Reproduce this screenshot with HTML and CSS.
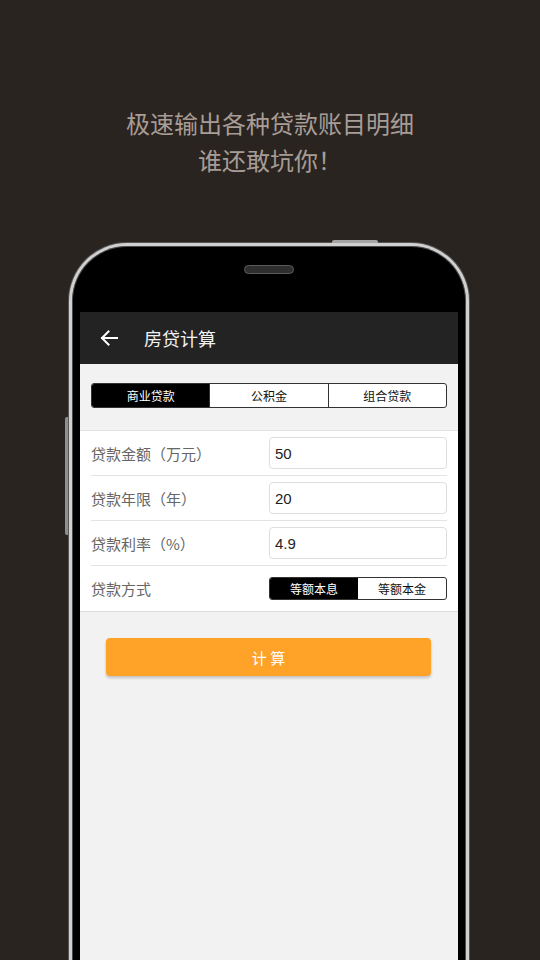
FILE: index.html
```html
<!DOCTYPE html>
<html lang="zh-CN">
<head>
<meta charset="utf-8">
<title>房贷计算</title>
<link rel="stylesheet" href="styles.css">
</head>
<body>
<div class="hero">
  <p class="hero-line">极速输出各种贷款账目明细</p>
  <p class="hero-line">谁还敢坑你！</p>
</div>
<div class="phone">
  <span class="btn-top"></span>
  <span class="btn-side"></span>
  <div class="bezel-top"><span class="speaker"></span></div>
  <div class="screen">
    <div class="appbar">
      <svg class="back" viewBox="0 0 18 16" width="18" height="16"><path d="M17 8H2M8.5 1.5L2 8l6.5 6.5" fill="none" stroke="#fff" stroke-width="2" stroke-linecap="square"/></svg>
      <span class="title">房贷计算</span>
    </div>
    <div class="content">
      <div class="tabs">
        <span class="tab tab-on">商业贷款</span>
        <span class="tab">公积金</span>
        <span class="tab">组合贷款</span>
      </div>
      <div class="form">
        <div class="row">
          <span class="label">贷款金额（万元）</span>
          <span class="field">50</span>
        </div>
        <div class="row">
          <span class="label">贷款年限（年）</span>
          <span class="field">20</span>
        </div>
        <div class="row">
          <span class="label">贷款利率（%）</span>
          <span class="field">4.9</span>
        </div>
        <div class="row">
          <span class="label">贷款方式</span>
          <div class="toggle">
            <span class="opt opt-on">等额本息</span>
            <span class="opt">等额本金</span>
          </div>
        </div>
      </div>
      <div class="calc">计 算</div>
    </div>
  </div>
</div>
</body>
</html>
```
FILE: styles.css
```css
html, body {
  margin: 0;
  padding: 0;
}
body {
  width: 540px;
  height: 960px;
  overflow: hidden;
  background: #2a2421;
  font-family: "Noto Sans CJK SC", "Noto Sans", sans-serif;
}
.hero {
  padding-top: 104px;
  text-align: center;
}
.hero-line {
  margin: 0;
  font-family: "Noto Sans CJK TC", "Noto Sans CJK SC", sans-serif;
  font-size: 24px;
  line-height: 37px;
  color: #a79d96;
}
.phone {
  position: relative;
  box-sizing: border-box;
  width: 400px;
  height: 760px;
  margin: 65px 0 0 69px;
  border: 3px solid #d0d0d0;
  border-bottom: none;
  border-radius: 58px 58px 0 0;
  background: #000;
  padding: 0 8px;
  box-shadow: inset 0 0 0 1px #4a4a4a, 0 0 0 1px #555;
}
.btn-top {
  position: absolute;
  top: -6px;
  left: 260px;
  width: 46px;
  height: 3px;
  background: #a5a5a5;
  border-radius: 2px 2px 0 0;
}
.btn-side {
  position: absolute;
  top: 171px;
  left: -7px;
  width: 3px;
  height: 118px;
  background: #8f8f8f;
  border-radius: 2px 0 0 2px;
}
.bezel-top {
  height: 66px;
  display: flex;
  justify-content: center;
  align-items: flex-start;
}
.speaker {
  margin-top: 19px;
  width: 48px;
  height: 7px;
  border: 1px solid #5a5a5a;
  border-radius: 5px;
  background: #2e2e2e;
}
.screen {
  width: 378px;
  height: 700px;
  background: #f2f2f2;
}
.appbar {
  height: 52px;
  background: #232323;
  display: flex;
  align-items: center;
  padding-left: 20px;
}
.back {
  display: block;
}
.title {
  margin-left: 26px;
  font-size: 18px;
  color: #f2f2f2;
}
.content {
  padding-top: 19px;
}
.tabs {
  display: flex;
  margin: 0 11px;
  height: 25px;
  box-sizing: border-box;
  border: 1px solid #333;
  border-radius: 3px;
  overflow: hidden;
  background: #fff;
}
.tab {
  flex: 1;
  display: flex;
  align-items: center;
  justify-content: center;
  font-size: 12px;
  color: #111;
  border-left: 1px solid #333;
}
.tab:first-child {
  border-left: none;
}
.tab-on {
  background: #000;
  color: #fff;
}
.form {
  margin-top: 22px;
  background: #fff;
  border-top: 1px solid #e2e2e2;
  border-bottom: 1px solid #dcdcdc;
  padding: 0 11px;
}
.row {
  height: 45px;
  box-sizing: border-box;
  display: flex;
  align-items: center;
  justify-content: space-between;
  border-bottom: 1px solid #e3e3e3;
}
.row:last-child {
  border-bottom: none;
}
.label {
  font-size: 15px;
  color: #666;
}
.field {
  box-sizing: border-box;
  width: 178px;
  height: 32px;
  border: 1px solid #dedede;
  border-radius: 4px;
  padding-left: 5px;
  display: flex;
  align-items: center;
  font-family: "Liberation Sans", Arial, sans-serif;
  font-size: 15px;
  color: #222;
}
.toggle {
  box-sizing: border-box;
  width: 178px;
  height: 23px;
  display: flex;
  border: 1px solid #333;
  border-radius: 3px;
  overflow: hidden;
}
.opt {
  flex: 1;
  display: flex;
  align-items: center;
  justify-content: center;
  font-size: 12px;
  color: #111;
}
.opt-on {
  background: #000;
  color: #fff;
}
.calc {
  margin: 26px 27px 0 26px;
  height: 38px;
  border-radius: 4px;
  background: #fea228;
  box-shadow: 0 2px 3px rgba(0,0,0,0.2);
  display: flex;
  align-items: center;
  justify-content: center;
  font-size: 15px;
  color: #fff;
}
```
